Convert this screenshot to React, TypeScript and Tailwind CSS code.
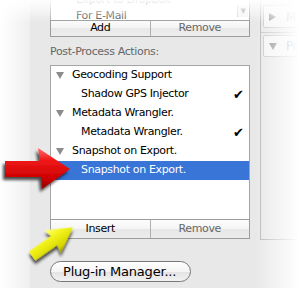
import React from 'react';

type Row = { label: string; parent?: boolean; check?: boolean; selected?: boolean };

const rows: Row[] = [
  { label: 'Geocoding Support', parent: true },
  { label: 'Shadow GPS Injector', check: true },
  { label: 'Metadata Wrangler.', parent: true },
  { label: 'Metadata Wrangler.', check: true },
  { label: 'Snapshot on Export.', parent: true },
  { label: 'Snapshot on Export.', selected: true },
];

function Disclosure({ open = true }: { open?: boolean }) {
  return open ? (
    <svg width="8" height="7" viewBox="0 0 8 7" className="shrink-0">
      <polygon points="0,0 8,0 4,7" fill="#8c8c8c" />
    </svg>
  ) : (
    <svg width="7" height="8" viewBox="0 0 7 8" className="shrink-0">
      <polygon points="0,0 7,4 0,8" fill="#8c8c8c" />
    </svg>
  );
}

function TreeRow({ row }: { row: Row }) {
  return (
    <div
      className={
        'h-[19px] flex items-center pr-[5px] ' +
        (row.selected ? 'bg-[#3875d7] text-white ' : 'text-black ') +
        (row.parent ? 'pl-[5px]' : 'pl-[30px]')
      }
    >
      {row.parent && <Disclosure />}
      <span className={row.parent ? 'ml-[8px]' : ''}>{row.label}</span>
      {row.check && <span className="ml-auto text-[13px] leading-none tracking-normal">✔</span>}
    </div>
  );
}

function Arrows() {
  return (
    <svg width="297" height="288" viewBox="0 0 297 288" className="absolute inset-0 pointer-events-none">
      <defs>
        <linearGradient id="red" x1="0" y1="0" x2="0" y2="1">
          <stop offset="0" stopColor="#ff6a6a" />
          <stop offset="0.3" stopColor="#f01818" />
          <stop offset="0.75" stopColor="#cc0000" />
          <stop offset="1" stopColor="#8a0000" />
        </linearGradient>
        <linearGradient id="yel" x1="0" y1="0" x2="0" y2="1">
          <stop offset="0" stopColor="#ffff8a" />
          <stop offset="0.35" stopColor="#f4f41c" />
          <stop offset="0.8" stopColor="#d6d600" />
          <stop offset="1" stopColor="#9a9a00" />
        </linearGradient>
        <filter id="sh" x="-30%" y="-30%" width="160%" height="170%">
          <feDropShadow dx="-2" dy="3" stdDeviation="1.6" floodColor="#000" floodOpacity="0.7" />
        </filter>
      </defs>
      <polygon
        points="5,161 40,161 38,148 70,169 42,189 41,177 5,177"
        fill="url(#red)"
        filter="url(#sh)"
      />
      <g transform="translate(32,256) rotate(-35)">
        <polygon
          points="0,-5.5 27,-5.5 25,-14 50,0 25,14 27,5.5 0,5.5"
          fill="url(#yel)"
          filter="url(#sh)"
        />
      </g>
    </svg>
  );
}

export default function App() {
  return (
    <div className="relative w-[297px] h-[288px] overflow-hidden flex bg-[#e8e8e8] font-['DejaVu_Sans',sans-serif] text-[11px] tracking-[-0.35px]">
      <div className="w-[30px] shrink-0 bg-gradient-to-r from-white to-[#efefef]" />

      <div className="flex flex-1 min-w-0">
        <div className="ml-[20px] w-[200px] shrink-0 flex flex-col">
          {/* export list, scrolled */}
          <div className="relative h-[20px] bg-white border-x border-[#a5a5a5] overflow-hidden">
            <div className="-mt-[8px] text-[#444]">
              <div className="h-[16px] flex items-center pl-[25px]">Export to Dropbox</div>
              <div className="h-[16px] flex items-center pl-[25px]">For E-Mail</div>
            </div>
            <div className="absolute right-[1px] top-[5px] w-[11px] h-[12px] bg-[#f4f4f4] border-l border-[#d0d0d0] flex items-center justify-center text-[7px] text-[#999]">
              ▼
            </div>
          </div>
          <div className="h-[17px] flex border border-[#9c9c9c] bg-[linear-gradient(#fbfbfb_0%,#f3f3f3_50%,#e8e8e8_50%,#ededed_100%)]">
            <div className="flex-1 flex items-center justify-center text-black">Add</div>
            <div className="flex-1 flex items-center justify-center border-l border-[#b0b0b0] text-[#666]">Remove</div>
          </div>

          <div className="h-[28px] pt-[3px] flex items-center text-[#666]">Post-Process Actions:</div>

          <div className="h-[154px] bg-white border-x border-t border-[#a5a5a5]">
            {rows.map((r, i) => (
              <TreeRow key={i} row={r} />
            ))}
          </div>
          <div className="h-[20px] flex border border-[#9c9c9c] bg-[linear-gradient(#fcfcfc_0%,#f5f5f5_50%,#e7e7e7_50%,#ececec_100%)]">
            <div className="flex-1 flex items-center justify-center text-black">Insert</div>
            <div className="flex-1 flex items-center justify-center border-l border-[#b0b0b0] text-[#666]">Remove</div>
          </div>

          <div className="mt-[22px] w-[141px] h-[21px] rounded-full border border-[#777] bg-[linear-gradient(#ffffff_0%,#f4f4f4_50%,#e4e4e4_55%,#f2f2f2_100%)] flex items-center pl-[12px] text-[13px] tracking-[-0.2px] text-black">
            Plug-in Manager...
          </div>
        </div>

        {/* side panel, mostly faded */}
        <div className="ml-[10px] flex-1 h-[240px] border-l border-b border-[#b8b8b8] flex flex-col overflow-hidden">
          <div className="mt-[5px] ml-[2px] h-[23px] w-[90px] shrink-0 border border-[#c8c8c8] rounded-[2px] bg-[#f4f4f4] flex items-center gap-[10px] pl-[5px] text-[12px] text-[#aaa]">
            <Disclosure open={false} />
            <span>M</span>
          </div>
          <div className="mt-[4px] border-t border-[#c4c4c4]" />
          <div className="mt-[2px] ml-[2px] h-[22px] w-[90px] shrink-0 border border-[#c8c8c8] rounded-[2px] bg-[#f4f4f4] flex items-center gap-[9px] pl-[5px] text-[12px] text-[#999]">
            <Disclosure />
            <span>Po</span>
          </div>
        </div>
      </div>

      <div className="absolute top-0 inset-x-0 h-[22px] pointer-events-none bg-[linear-gradient(rgba(255,255,255,0.97),rgba(255,255,255,0.45)_60%,rgba(255,255,255,0))]" />
      <div className="absolute inset-y-0 right-0 w-[42px] pointer-events-none bg-gradient-to-r from-white/0 to-white/95" />

      <Arrows />
    </div>
  );
}
